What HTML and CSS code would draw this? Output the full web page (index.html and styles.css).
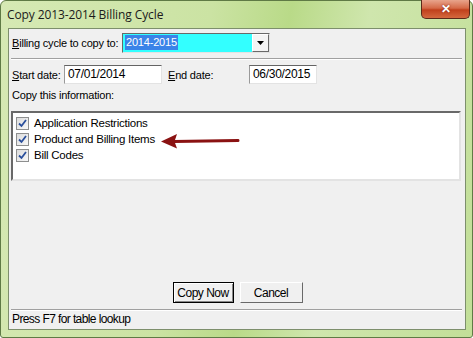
FILE: index.html
```html
<!DOCTYPE html>
<html lang="en">
<head>
    <meta charset="UTF-8">
    <title>Copy 2013-2014 Billing Cycle</title>
    <link rel="stylesheet" href="styles.css">
</head>
<body>
    <div class="window">
        <div class="titlebar">
            <span class="title">Copy 2013-2014 Billing Cycle</span>
            <button class="close-button">&#x2715;</button>
        </div>
        <div class="client">
            <div class="row cycle-row">
                <label class="label cycle-label"><u>B</u>illing cycle to copy to:</label>
                <div class="combo">
                    <div class="combo-field"><span class="selected">2014-2015</span></div>
                    <div class="combo-button">
                        <svg width="7" height="4" viewBox="0 0 7 4"><path d="M0 0H7L3.5 4Z" fill="#000"/></svg>
                    </div>
                </div>
            </div>
            <div class="separator"></div>
            <div class="row date-row">
                <label class="label start-label"><u>S</u>tart date:</label>
                <div class="input start-input">07/01/2014</div>
                <label class="label end-label"><u>E</u>nd date:</label>
                <div class="input end-input">06/30/2015</div>
            </div>
            <div class="label info-label">Copy this information:</div>
            <div class="listbox">
                <div class="item"><span class="checkbox"><svg width="9" height="9" viewBox="0 0 9 9"><path d="M1 4.5L3.5 7L8 1" fill="none" stroke="#2a4f9c" stroke-width="1.8"/></svg></span>Application Restrictions</div>
                <div class="item"><span class="checkbox"><svg width="9" height="9" viewBox="0 0 9 9"><path d="M1 4.5L3.5 7L8 1" fill="none" stroke="#2a4f9c" stroke-width="1.8"/></svg></span>Product and Billing Items</div>
                <div class="item"><span class="checkbox"><svg width="9" height="9" viewBox="0 0 9 9"><path d="M1 4.5L3.5 7L8 1" fill="none" stroke="#2a4f9c" stroke-width="1.8"/></svg></span>Bill Codes</div>
                <svg class="arrow" width="82" height="18" viewBox="0 0 82 18">
                    <path d="M14 9.5L78 8.5" stroke="#8a1212" stroke-width="3" stroke-linecap="round" fill="none"/>
                    <path d="M1 9.5L17 2L14.5 9.5L17 16.5Z" fill="#8a1212"/>
                </svg>
            </div>
            <div class="spacer"></div>
            <div class="button-row">
                <button class="push-button default">Copy Now</button>
                <button class="push-button">Cancel</button>
            </div>
            <div class="separator bottom-separator"></div>
            <div class="status">Press F7 for table lookup</div>
        </div>
    </div>
</body>
</html>
```

FILE: styles.css
```css
* {
    box-sizing: border-box;
}

body {
    margin: 0;
    background: #ffffff;
    font-family: "Liberation Sans", Arial, sans-serif;
    font-size: 11px;
    letter-spacing: -0.2px;
    color: #000;
}

.window {
    width: 473px;
    height: 338px;
    border: 1px solid #5f7a45;
    border-radius: 6px 6px 3px 3px;
    background: linear-gradient(100deg, #d6e9b4 0%, #cbe3a3 40%, #b9da88 55%, #cfe6ad 70%, #c2df98 100%);
    padding: 0 6px 7px 7px;
    display: flex;
    flex-direction: column;
}

.titlebar {
    height: 27px;
    display: flex;
    align-items: flex-start;
    position: relative;
}

.title {
    font-family: "Open Sans", "Noto Sans", sans-serif;
    font-size: 12px;
    letter-spacing: -0.1px;
    color: #1b1b1b;
    margin-top: 5px;
    margin-left: -1px;
}

.close-button {
    position: absolute;
    right: -4px;
    top: -1px;
    width: 49px;
    height: 19px;
    border: 1px solid #5b2a1a;
    border-top: none;
    border-radius: 0 0 5px 5px;
    background: linear-gradient(#e8a48c 0%, #d56a48 45%, #c0401c 55%, #d4683e 100%);
    color: #fff;
    font-size: 12px;
    font-weight: bold;
    line-height: 17px;
    padding: 0;
    text-shadow: 0 0 2px #7a1a10;
}

.client {
    flex: 1;
    background: #f0f0f0;
    border: 1px solid #7d8f6c;
    display: flex;
    flex-direction: column;
    padding: 0 2px 0 1px;
}

.row {
    display: flex;
    align-items: center;
}

.label {
    padding-left: 2px;
    white-space: nowrap;
}

.cycle-row {
    margin-top: 4px;
    height: 20px;
}

.cycle-label {
    width: 112px;
}

.combo {
    width: 148px;
    height: 20px;
    display: flex;
    border-top: 1px solid #696969;
    border-left: 1px solid #696969;
    border-bottom: 1px solid #e3e3e3;
    border-right: 1px solid #e3e3e3;
    background: #33ffff;
}

.combo-field {
    flex: 1;
    padding: 1px 0 0 2px;
}

.selected {
    display: inline-block;
    background: #3a83e8;
    color: #fff;
    line-height: 15px;
    padding: 0 1px;
}

.combo-button {
    width: 17px;
    background: #f4f4f4;
    border-left: 1px solid #fff;
    border-top: 1px solid #fff;
    border-right: 1px solid #6a6a6a;
    border-bottom: 1px solid #6a6a6a;
    display: flex;
    align-items: center;
    justify-content: center;
}

.separator {
    margin: 5px 1px 0 1px;
    height: 2px;
    border-top: 1px solid #a0a0a0;
    border-bottom: 1px solid #ffffff;
}

.date-row {
    margin-top: 5px;
    height: 19px;
}

.start-label {
    width: 54px;
}

.input {
    height: 19px;
    background: #fff;
    border-top: 1px solid #646464;
    border-left: 1px solid #9a9a9a;
    border-bottom: 1px solid #e3e3e3;
    border-right: 1px solid #e3e3e3;
    padding: 1px 0 0 3px;
    line-height: 15px;
    font-size: 12px;
    letter-spacing: -0.3px;
}

.start-input {
    width: 98px;
}

.end-label {
    width: 83px;
    margin-left: 4px;
}

.end-input {
    width: 68px;
}

.info-label {
    margin-top: 4px;
    line-height: 14px;
}

.listbox {
    position: relative;
    margin: 9px 2px 0 1px;
    height: 70px;
    background: #fff;
    border-top: 2px solid #696969;
    border-left: 2px solid #696969;
    border-bottom: 2px solid #e3e3e3;
    border-right: 2px solid #e3e3e3;
    padding-top: 2px;
}

.item {
    display: flex;
    align-items: center;
    height: 16px;
    padding-left: 3px;
    font-size: 11.5px;
    letter-spacing: -0.25px;
}

.checkbox {
    width: 13px;
    height: 13px;
    border: 1px solid #8e8f8f;
    background: linear-gradient(135deg, #dcdcdc, #f8f8f8);
    margin-right: 5px;
    display: flex;
    align-items: center;
    justify-content: center;
}

.arrow {
    position: absolute;
    left: 147px;
    top: 19px;
}

.spacer {
    flex: 1;
}

.button-row {
    display: flex;
    justify-content: center;
    gap: 6px;
    padding-left: 2px;
}

.push-button {
    height: 21px;
    font-family: "Liberation Sans", Arial, sans-serif;
    font-size: 12px;
    letter-spacing: -0.5px;
    background: #f0f0f0;
    border-top: 1px solid #fff;
    border-left: 1px solid #fff;
    border-right: 1px solid #696969;
    border-bottom: 1px solid #696969;
    padding: 0;
    width: 63px;
}

.push-button.default {
    width: 61px;
    border: 1px solid #000;
    box-shadow: inset 1px 1px 0 #fff, inset -1px -1px 0 #888;
}

.bottom-separator {
    margin-top: 6px;
}

.status {
    height: 18px;
    padding-left: 2px;
    line-height: 16px;
    font-size: 12px;
    letter-spacing: -0.6px;
}
```
